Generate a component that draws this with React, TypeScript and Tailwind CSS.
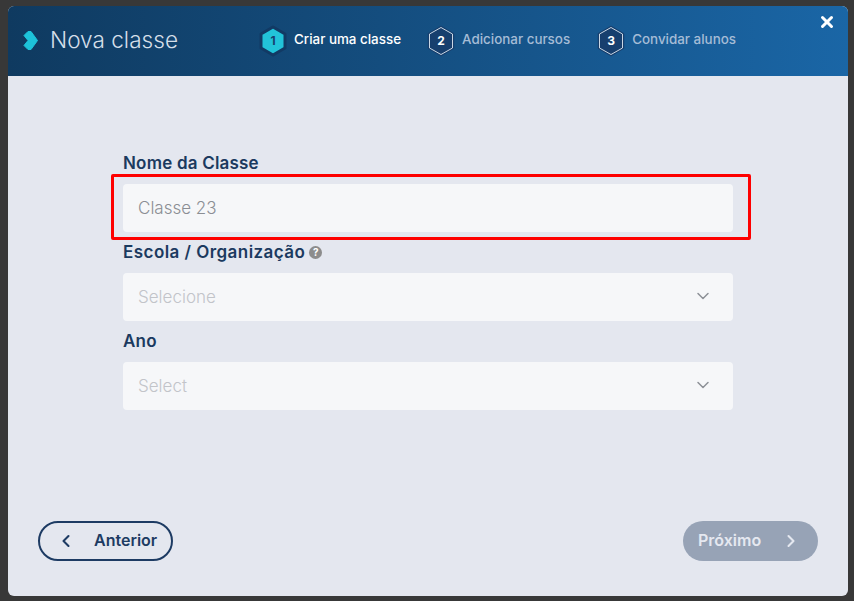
import { ChevronDown, ChevronLeft, ChevronRight, X } from 'lucide-react'

const Hexagon = ({ n, active }: { n: number; active?: boolean }) => (
  <div className="relative h-[32px] w-[28px] shrink-0">
    <svg viewBox="0 0 28 32" className="h-[32px] w-[28px]">
      {active ? (
        <path
          d="M14 2 L26 9 V23 L14 30 L2 23 V9 Z"
          fill="#22c3d9"
          stroke="#123a64"
          strokeWidth="3"
          strokeLinejoin="round"
        />
      ) : (
        <>
          <path
            d="M14 2 L26 9 V23 L14 30 L2 23 V9 Z"
            fill="#173f6e"
            stroke="#173f6e"
            strokeWidth="2.5"
            strokeLinejoin="round"
          />
          <path
            d="M14 2.5 L25.5 9 V23 L14 29.5 L2.5 23 V9 Z"
            fill="none"
            stroke="#c9d6e4"
            strokeWidth="1"
            strokeLinejoin="round"
          />
        </>
      )}
    </svg>
    <span
      className={`absolute inset-0 flex items-center justify-center text-[12px] font-bold ${
        active ? 'text-[#173f6e]' : 'text-white'
      }`}
    >
      {n}
    </span>
  </div>
)

const Step = ({ n, label, active }: { n: number; label: string; active?: boolean }) => (
  <div className="flex items-center gap-[7px]">
    <Hexagon n={n} active={active} />
    <span className={`-mt-[2px] text-[13.4px] font-medium ${active ? 'text-white' : 'text-[#a5bcd6]'}`}>{label}</span>
  </div>
)

const SelectField = ({ placeholder }: { placeholder: string }) => (
  <div className="flex h-[48px] items-center justify-between rounded-[4px] bg-[#f6f7f9] pl-[15px] pr-[20px]">
    <span className="pt-[2px] text-[17px] font-light text-[#c2c4c9]">{placeholder}</span>
    <ChevronDown className="-mt-[3px] h-[20px] w-[20px] text-[#8d9097]" strokeWidth={1.8} />
  </div>
)

export default function App() {
  return (
    <div className="h-[601px] w-[854px] overflow-hidden bg-[#383838] pb-[5px] pl-[8px] pr-[6px] pt-[6px] font-['Inter',sans-serif]">
      <div className="flex h-[590px] w-[840px] flex-col overflow-hidden rounded-[6px] bg-[#e4e7ef]">
        <div className="relative flex h-[70px] shrink-0 items-center bg-gradient-to-r from-[#0f3a60] to-[#1a66a6]">
          <div className="flex w-[251px] items-center pl-[15px]">
            <svg viewBox="0 0 15 19" className="h-[19px] w-[15px]">
              <path
                d="M5 0.5 H8 L14.5 9.5 L8 18.5 H5 L1 14.5 L5 9.5 L1 4.5 Z"
                fill="#1dc3da"
                stroke="#1dc3da"
                strokeLinejoin="round"
              />
            </svg>
            <span className="-mt-[2px] ml-[12px] text-[22.6px] font-light text-[#d5dfe9]">Nova classe</span>
          </div>
          <div className="flex items-center pb-[1px]">
            <Step n={1} label="Criar uma classe" active />
            <div className="ml-[26px]">
              <Step n={2} label="Adicionar cursos" />
            </div>
            <div className="ml-[27px]">
              <Step n={3} label="Convidar alunos" />
            </div>
          </div>
          <button className="absolute right-[12px] top-[7px] text-white">
            <X className="h-[18px] w-[18px]" strokeWidth={4} />
          </button>
        </div>

        <div className="flex flex-1 flex-col px-[30px] pb-[35px]">
          <div className="mx-[85px] mt-[75px] flex w-[610px] flex-col">
            <label className="mb-[9px] text-[17px] font-semibold leading-[24px] tracking-[0.2px] text-[#1b3a5f]">
              Nome da Classe
            </label>
            <div className="relative">
              <div className="flex h-[48px] items-center rounded-[4px] bg-[#f6f7f9] pl-[15px] pt-[2px] text-[17px] font-light text-[#8b8e94]">
                Classe 23
              </div>
              <div className="absolute -bottom-[8px] -left-[12px] -right-[18px] -top-[10px] rounded-[2px] border-[3px] border-[#fe0000]" />
            </div>
            <label className="mb-[9px] mt-[8px] flex items-center gap-[4px] text-[17px] font-semibold leading-[24px] tracking-[0.45px] text-[#1b3a5f]">
              Escola / Organização
              <span className="flex h-[13px] w-[13px] items-center justify-center rounded-full bg-[#8c8c8c] text-[10px] font-bold tracking-normal text-white">
                ?
              </span>
            </label>
            <SelectField placeholder="Selecione" />
            <label className="mb-[9px] mt-[8px] text-[17px] font-semibold leading-[24px] tracking-[0.2px] text-[#1b3a5f]">
              Ano
            </label>
            <SelectField placeholder="Select" />
          </div>

          <div className="mt-auto flex items-center justify-between">
            <button className="flex h-[40px] w-[135px] items-center rounded-full border-2 border-[#1d3b63] pl-[16px] text-[16px] font-semibold text-[#1d3b63]">
              <ChevronLeft className="h-[20px] w-[20px]" strokeWidth={2.5} />
              <span className="mb-[2px] ml-[18px]">Anterior</span>
            </button>
            <button className="flex h-[40px] w-[135px] items-center rounded-full bg-[#97a3b6] pl-[15px] text-[16px] font-semibold text-[#e5e8f0]">
              <span className="mb-[2px]">Próximo</span>
              <ChevronRight className="ml-[20px] h-[20px] w-[20px]" strokeWidth={2.5} />
            </button>
          </div>
        </div>
      </div>
    </div>
  )
}
